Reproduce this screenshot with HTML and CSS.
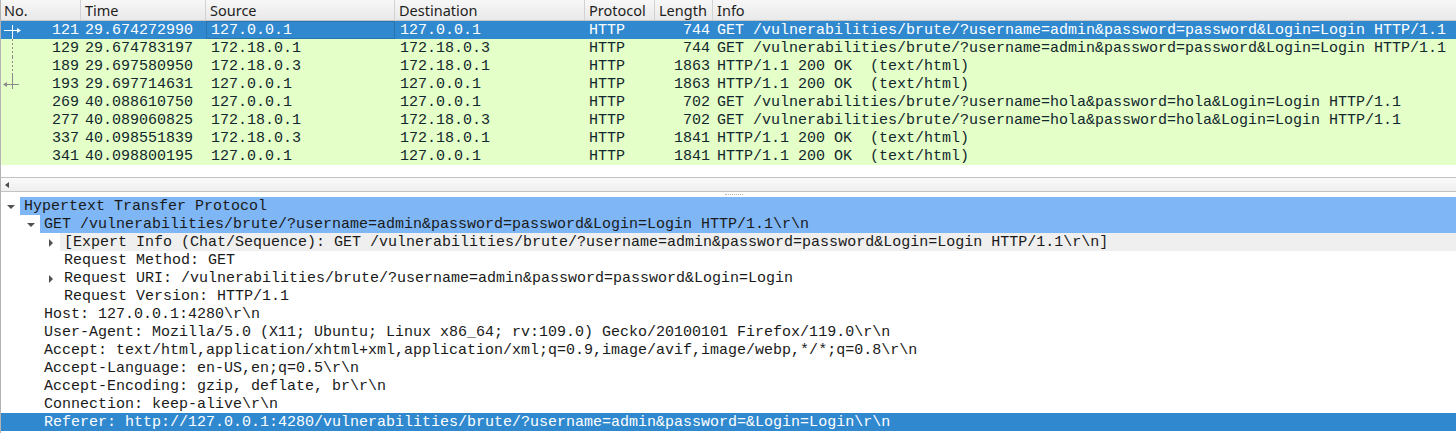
FILE: index.html
```html
<!DOCTYPE html>
<html>
<head>
<meta charset="utf-8">
<title>Wireshark</title>
<link rel="stylesheet" href="styles.css">
</head>
<body>
<div class="app">
  <div class="packets">
    <div class="row head">
      <div class="hc">No.</div><div class="hc">Time</div><div class="hc">Source</div><div class="hc">Destination</div><div class="hc">Protocol</div><div class="hc">Length</div><div class="hc last">Info</div>
    </div>
    <div class="row sel">
      <div class="c no"><svg class="tl" width="22" height="18" viewBox="0 0 22 18"><line x1="3" y1="9.5" x2="17" y2="9.5" stroke="#fff"/><polygon points="16,7 20,9.5 16,12" fill="#fff"/><line x1="11.5" y1="4" x2="11.5" y2="18" stroke="#fff"/></svg>121</div><div class="c">29.674272990</div><div class="c focus">127.0.0.1</div><div class="c">127.0.0.1</div><div class="c">HTTP</div><div class="c r">744</div><div class="c">GET /vulnerabilities/brute/?username=admin&amp;password=password&amp;Login=Login HTTP/1.1</div>
    </div>
    <div class="row g">
      <div class="c no"><svg class="tl" width="22" height="18" viewBox="0 0 22 18"><line x1="11.5" y1="0" x2="11.5" y2="18" stroke="#8a8a8a" stroke-dasharray="2 2"/></svg>129</div><div class="c">29.674783197</div><div class="c">172.18.0.1</div><div class="c">172.18.0.3</div><div class="c">HTTP</div><div class="c r">744</div><div class="c">GET /vulnerabilities/brute/?username=admin&amp;password=password&amp;Login=Login HTTP/1.1</div>
    </div>
    <div class="row g">
      <div class="c no"><svg class="tl" width="22" height="18" viewBox="0 0 22 18"><line x1="11.5" y1="0" x2="11.5" y2="18" stroke="#8a8a8a" stroke-dasharray="2 2"/></svg>189</div><div class="c">29.697580950</div><div class="c">172.18.0.3</div><div class="c">172.18.0.1</div><div class="c">HTTP</div><div class="c r">1863</div><div class="c">HTTP/1.1 200 OK  (text/html)</div>
    </div>
    <div class="row g">
      <div class="c no"><svg class="tl" width="22" height="18" viewBox="0 0 22 18"><line x1="11.5" y1="0" x2="11.5" y2="14" stroke="#8a8a8a"/><line x1="5" y1="9.5" x2="18" y2="9.5" stroke="#8a8a8a"/><polygon points="2,9.5 6,7 6,12" fill="#8a8a8a"/></svg>193</div><div class="c">29.697714631</div><div class="c">127.0.0.1</div><div class="c">127.0.0.1</div><div class="c">HTTP</div><div class="c r">1863</div><div class="c">HTTP/1.1 200 OK  (text/html)</div>
    </div>
    <div class="row g">
      <div class="c no">269</div><div class="c">40.088610750</div><div class="c">127.0.0.1</div><div class="c">127.0.0.1</div><div class="c">HTTP</div><div class="c r">702</div><div class="c">GET /vulnerabilities/brute/?username=hola&amp;password=hola&amp;Login=Login HTTP/1.1</div>
    </div>
    <div class="row g">
      <div class="c no">277</div><div class="c">40.089060825</div><div class="c">172.18.0.1</div><div class="c">172.18.0.3</div><div class="c">HTTP</div><div class="c r">702</div><div class="c">GET /vulnerabilities/brute/?username=hola&amp;password=hola&amp;Login=Login HTTP/1.1</div>
    </div>
    <div class="row g">
      <div class="c no">337</div><div class="c">40.098551839</div><div class="c">172.18.0.3</div><div class="c">172.18.0.1</div><div class="c">HTTP</div><div class="c r">1841</div><div class="c">HTTP/1.1 200 OK  (text/html)</div>
    </div>
    <div class="row g">
      <div class="c no">341</div><div class="c">40.098800195</div><div class="c">127.0.0.1</div><div class="c">127.0.0.1</div><div class="c">HTTP</div><div class="c r">1841</div><div class="c">HTTP/1.1 200 OK  (text/html)</div>
    </div>
  </div>
  <div class="hscroll"><span class="larrow"></span></div>
  <div class="splitter"><span class="grip"></span></div>
  <div class="details">
    <div class="node l0 hl"><span class="tw open"></span><span class="tx">Hypertext Transfer Protocol</span></div>
    <div class="node l1 hl"><span class="tw open"></span><span class="tx">GET /vulnerabilities/brute/?username=admin&amp;password=password&amp;Login=Login HTTP/1.1\r\n</span></div>
    <div class="node l2 ex"><span class="tw closed"></span><span class="tx">[Expert Info (Chat/Sequence): GET /vulnerabilities/brute/?username=admin&amp;password=password&amp;Login=Login HTTP/1.1\r\n]</span></div>
    <div class="node l2"><span class="tw"></span><span class="tx">Request Method: GET</span></div>
    <div class="node l2"><span class="tw closed"></span><span class="tx">Request URI: /vulnerabilities/brute/?username=admin&amp;password=password&amp;Login=Login</span></div>
    <div class="node l2"><span class="tw"></span><span class="tx">Request Version: HTTP/1.1</span></div>
    <div class="node l1"><span class="tw"></span><span class="tx">Host: 127.0.0.1:4280\r\n</span></div>
    <div class="node l1"><span class="tw"></span><span class="tx">User-Agent: Mozilla/5.0 (X11; Ubuntu; Linux x86_64; rv:109.0) Gecko/20100101 Firefox/119.0\r\n</span></div>
    <div class="node l1"><span class="tw"></span><span class="tx">Accept: text/html,application/xhtml+xml,application/xml;q=0.9,image/avif,image/webp,*/*;q=0.8\r\n</span></div>
    <div class="node l1"><span class="tw"></span><span class="tx">Accept-Language: en-US,en;q=0.5\r\n</span></div>
    <div class="node l1"><span class="tw"></span><span class="tx">Accept-Encoding: gzip, deflate, br\r\n</span></div>
    <div class="node l1"><span class="tw"></span><span class="tx">Connection: keep-alive\r\n</span></div>
    <div class="node l1 cur"><span class="tw"></span><span class="tx">Referer: http://127.0.0.1:4280/vulnerabilities/brute/?username=admin&amp;password=&amp;Login=Login\r\n</span></div>
  </div>
</div>
</body>
</html>
```
FILE: styles.css
```css
html, body {
  margin: 0;
  padding: 0;
  background: #ffffff;
}
.app {
  width: 1456px;
  height: 433px;
  overflow: hidden;
  display: flex;
  flex-direction: column;
  border-left: 1px solid #b4b4b4;
  box-sizing: border-box;
  font-family: "Liberation Mono", monospace;
  font-size: 15px;
}
.packets {
  height: 177px;
  flex: none;
  background: #fff;
}
.row {
  display: grid;
  grid-template-columns: 80px 125px 189px 190px 70px 58px 1fr;
  height: 18px;
  line-height: 18px;
  white-space: pre;
}
.row.head {
  height: 20px;
  line-height: 21px;
  border-bottom: 1px solid #c6c6c6;
  background: linear-gradient(#f7f7f7, #e9e9e9);
  font-family: "Noto Sans", sans-serif;
  font-size: 14.5px;
  color: #1e1e1e;
}
.hc {
  padding-left: 4px;
  border-right: 1px solid #d2d2d2;
  overflow: hidden;
}
.hc:first-child { padding-left: 3px; }
.hc.last { border-right: none; }
.c {
  padding-left: 4px;
  padding-top: 1px;
  height: 18px;
  box-sizing: border-box;
  overflow: hidden;
}
.c:nth-child(3), .c:nth-child(4) { padding-left: 5px; }
.c.r { text-align: right; padding-right: 3px; padding-left: 0; }
.c.no {
  position: relative;
  text-align: right;
  padding-right: 2px;
  padding-left: 0;
}
.tl {
  position: absolute;
  left: 0;
  top: 0;
}
.row.sel {
  background: #3089cf;
  color: #ffffff;
}
.row.sel .focus {
  outline: 1px solid #2a74ae;
  outline-offset: -1px;
}
.row.g {
  background: #e4ffc7;
  color: #12272e;
}
.hscroll {
  height: 15px;
  flex: none;
  box-sizing: border-box;
  border-top: 1px solid #c2c2c2;
  border-bottom: 1px solid #c2c2c2;
  background: linear-gradient(#fafafa, #efefef);
  display: flex;
  align-items: center;
  padding-left: 4px;
}
.larrow {
  width: 0;
  height: 0;
  border-top: 3px solid transparent;
  border-bottom: 3px solid transparent;
  border-right: 4px solid #4a4a4a;
}
.splitter {
  height: 5px;
  flex: none;
  background: #fff;
  display: flex;
  justify-content: center;
  align-items: center;
}
.grip {
  width: 18px;
  height: 1px;
  border-top: 1px dotted #b8b8b8;
  margin-left: 10px;
}
.details {
  flex: 1;
  color: #1a1a1a;
}
.node {
  display: flex;
  height: 18px;
  line-height: 18px;
  white-space: pre;
}
.node.l1 { padding-left: 20px; }
.node.l2 { padding-left: 40px; }
.tw {
  width: 19px;
  flex: none;
  display: flex;
  align-items: center;
  justify-content: center;
}
.tw.open::before {
  content: "";
  width: 0;
  height: 0;
  border-left: 4px solid transparent;
  border-right: 4px solid transparent;
  border-top: 4px solid #505050;
  margin-top: 2px;
}
.tw.closed::before {
  content: "";
  width: 0;
  height: 0;
  border-top: 4px solid transparent;
  border-bottom: 4px solid transparent;
  border-left: 4px solid #505050;
  margin-top: 1px;
}
.tx {
  flex: 1;
  padding-left: 4px;
  padding-top: 1px;
  box-sizing: border-box;
  height: 18px;
}
.node.hl .tx { background: #7fb6f6; }
.node.ex .tx { background: #efefef; }
.node.cur {
  background: #3089cf;
  color: #ffffff;
}
```
